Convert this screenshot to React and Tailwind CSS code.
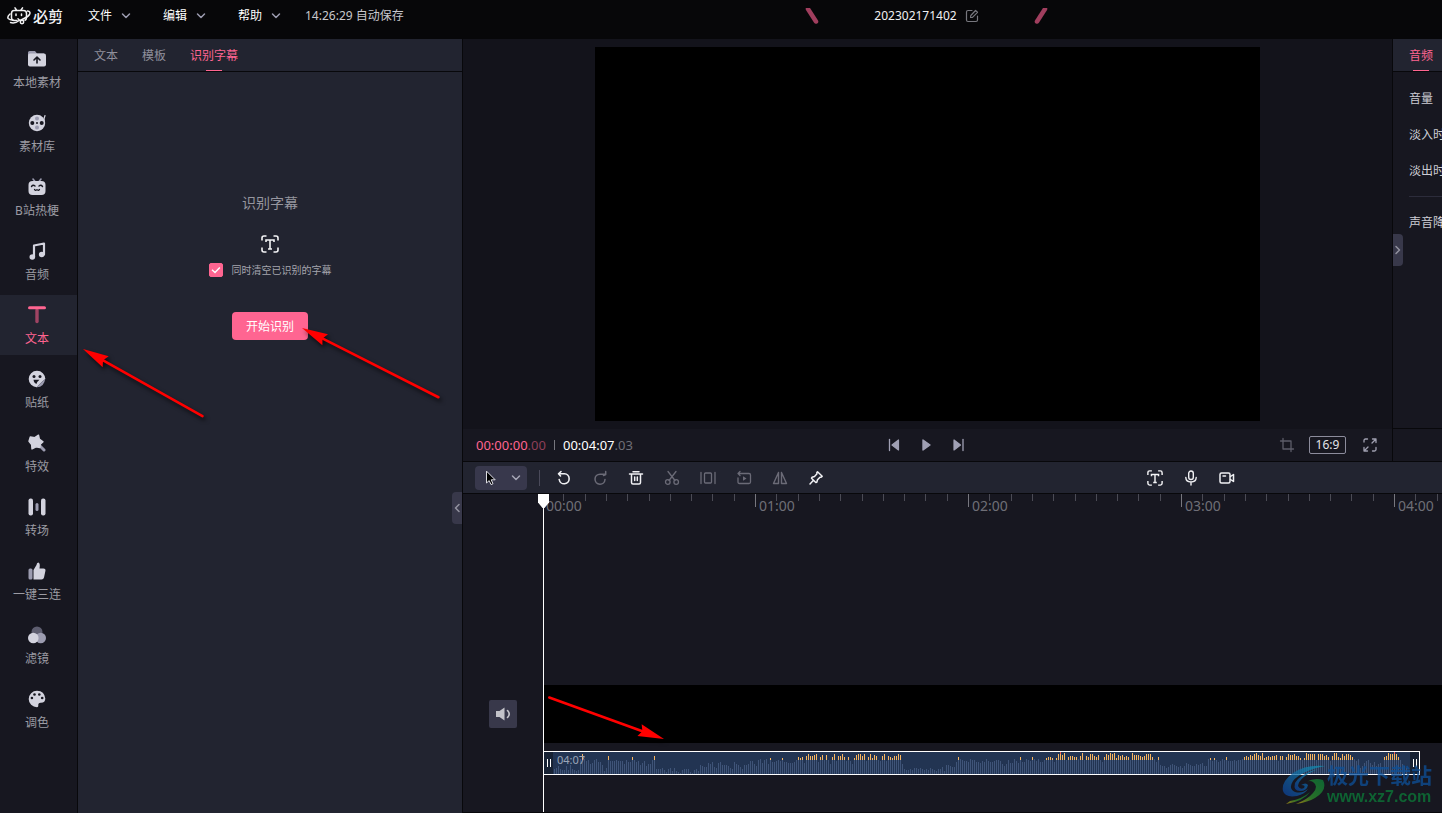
import React, { useState } from 'react';

// viewBox units are screen pixels for every icon below
const Icon = ({ size = 18, className = '', children }) => (
	<svg
		width={size}
		height={size}
		viewBox={`0 0 ${size} ${size}`}
		fill="none"
		stroke="none"
		strokeLinecap="round"
		strokeLinejoin="round"
		className={`shrink-0 ${className}`}
		aria-hidden="true"
	>
		{children}
	</svg>
);

const LIGHT = '#d3d3de';
const DIM = '#9c9cb0';
const DARK = '#171720';

const FolderIcon = () => (
	<Icon>
		<path d="M0 4V2.5Q0 1 1.500 1H7L9 3.500H16V6H0Z" fill={DIM} />
		<rect y="3.500" width="18" height="13" rx="2" fill={LIGHT} />
		<path d="M9 13V8M6 10L9 7.200L12 10" stroke={DARK} strokeWidth="1.600" />
	</Icon>
);

const ReelIcon = () => (
	<Icon>
		<path d="M13 15Q16.500 11 16 5L17 1.500" stroke={LIGHT} strokeWidth="1.200" />
		<circle cx="9" cy="9" r="8.200" fill={LIGHT} />
		<circle cx="9" cy="4.500" r="2" fill={DIM} />
		<circle cx="9" cy="13.500" r="2" fill={DIM} />
		<circle cx="4.300" cy="9" r="2" fill={DARK} />
		<circle cx="13.700" cy="9" r="2" fill={DARK} />
		<circle cx="9" cy="9" r="1" fill={DARK} />
	</Icon>
);

const TvIcon = () => (
	<Icon>
		<path d="M5 1L7 3.500M13 1L11 3.500" stroke={DIM} strokeWidth="1.600" />
		<rect x="0.500" y="3" width="17" height="14" rx="4" fill={LIGHT} />
		<path d="M3.500 8.500Q5 6.500 7 8M11 8Q13 6.500 14.500 8.500" stroke={DARK} strokeWidth="1.400" />
		<path d="M6.500 11.500Q7.800 13 9 11.700Q10.200 13 11.500 11.500" stroke={DARK} strokeWidth="1.200" />
	</Icon>
);

const MusicIcon = () => (
	<Icon>
		<path d="M6 15V3.500L16 1.500V12.500" stroke={LIGHT} strokeWidth="2.200" />
		<circle cx="4.300" cy="15" r="2.800" fill={LIGHT} />
		<circle cx="13.700" cy="12.500" r="2.800" fill={LIGHT} />
	</Icon>
);

const TextIcon = () => (
	<Icon>
		<path d="M9 4V15.500" stroke="#a04463" strokeWidth="3.400" />
		<path d="M1.500 1.800H16.500" stroke="#ff6591" strokeWidth="3" />
	</Icon>
);

const StickerIcon = () => (
	<Icon>
		<path d="M17.300 9A8.300 8.300 0 1 0 9 17.300Q10 13 17.300 9Z" fill={LIGHT} />
		<path d="M5.500 9.800H11.500Q9.500 12 9 14Q6 13.500 5.500 9.800Z" fill={DARK} />
		<path d="M17.300 8.500L8.500 17.300Q7.800 12 11 10.500Q13.500 9 17.300 8.500Z" fill={LIGHT} />
		<path d="M17.300 8.500L8.500 17.300Q16 17.500 17.300 8.500Z" fill={DIM} />
		<circle cx="6" cy="6.500" r="1.500" fill={DARK} />
		<circle cx="12" cy="6.500" r="1.500" fill={DARK} />
	</Icon>
);

const MagicIcon = () => (
	<Icon>
		<path d="M12 12L16 16" stroke={DIM} strokeWidth="3" />
		<path
			d="M10.500 1.200L11.300 5L15 7.800L12.300 10.300L11.800 13.500L8 12.800L4 15L3.600 10.500L1 7.200L2.300 3L6.800 3.600Z"
			fill={LIGHT}
			stroke={LIGHT}
			strokeWidth="1.400"
		/>
	</Icon>
);

const TransitionIcon = () => (
	<Icon>
		<rect x="0.500" y="0.500" width="4.500" height="17" rx="2" fill={LIGHT} />
		<rect x="7.500" y="5" width="3" height="8" rx="1.500" fill={DIM} />
		<rect x="13" y="0.500" width="4.500" height="17" rx="2" fill={LIGHT} />
	</Icon>
);

const ThumbIcon = () => (
	<Icon>
		<rect x="0.500" y="6.500" width="4" height="11" rx="1.500" fill={DIM} />
		<path
			d="M5.500 17.500V8L8.500 3Q8.800 0.500 10.200 0.500Q12.500 1 11.500 6.500H15.500Q17.800 6.500 17.500 8.500L16 15.500Q15.500 17.500 13.500 17.500Z"
			fill={LIGHT}
		/>
	</Icon>
);

const FilterIcon = () => (
	<Icon>
		<circle cx="9" cy="6" r="5.500" fill="#5e5e70" />
		<circle cx="12.700" cy="12" r="5.300" fill={DIM} />
		<circle cx="5.300" cy="12" r="5.300" fill={LIGHT} />
	</Icon>
);

const PaletteIcon = () => (
	<Icon>
		<path
			d="M9 0.700A8.300 8.300 0 0 0 9 17.300Q10.500 17.300 10.300 15.500Q10 12.500 13 12.700Q17.300 12.700 17.300 8.500Q16.500 1 9 0.700Z"
			fill={LIGHT}
		/>
		<circle cx="3.900" cy="8" r="1.300" fill={DARK} />
		<circle cx="6.500" cy="4.500" r="1.300" fill={DARK} />
		<circle cx="11.300" cy="4.500" r="1.300" fill={DARK} />
		<circle cx="14.200" cy="8" r="1.300" fill={DARK} />
	</Icon>
);

const ScanTextIcon = ({ size }) => (
	<svg width={size} height={size} viewBox="0 0 18 18" fill="none" stroke="#f4f4f6" strokeWidth="1.600" aria-hidden="true">
		<path d="M1 5.500V3Q1 1 3 1H5.500M12.500 1H15Q17 1 17 3V5.500M17 12.500V15Q17 17 15 17H12.500M5.500 17H3Q1 17 1 15V12.500" />
		<path d="M5 7V5H13V7M9 5V13.800M7 14H11" />
	</svg>
);

const Chevron = ({ className = '' }) => (
	<Icon size={10} className={className}>
		<path d="M1.500 3L5 6.500L8.500 3" stroke="currentColor" strokeWidth="1.500" />
	</Icon>
);

const CursorIcon = () => (
	<Icon size={16}>
		<path
			d="M4.500 1.500V13L7.200 10.600L9 14.600L11 13.700L9.200 9.800H12.800Z"
			fill="#000"
			stroke="#dcdce2"
			strokeWidth="1"
		/>
	</Icon>
);

const UndoIcon = () => (
	<Icon size={16}>
		<path d="M3 3.800H8.500A5 5 0 1 1 3.200 9.500M5 1.500L2.500 3.800L4.500 6" stroke="currentColor" strokeWidth="1.600" />
	</Icon>
);

const RedoIcon = () => (
	<Icon size={16}>
		<path d="M13 4.200H8A5 5 0 1 0 13 9.500M13.700 1.500V4.500L11.500 5.500" stroke="currentColor" strokeWidth="1.500" />
	</Icon>
);

const TrashIcon = () => (
	<Icon size={16}>
		<path
			d="M1.500 4H14.500M5 1.700H11M3.500 4.500V12.500Q3.500 14 5 14H11Q12.500 14 12.500 12.500V4.500M6.700 7V10.500M9.300 7V10.500"
			stroke="currentColor"
			strokeWidth="1.500"
		/>
	</Icon>
);

const CutIcon = () => (
	<Icon size={16}>
		<circle cx="3.800" cy="12" r="2.300" stroke="currentColor" strokeWidth="1.300" />
		<circle cx="12.200" cy="12" r="2.300" stroke="currentColor" strokeWidth="1.300" />
		<path d="M4 1.500L11 10.500M12 1.500L5 10.500" stroke="currentColor" strokeWidth="1.300" />
	</Icon>
);

const SplitIcon = () => (
	<Icon size={16}>
		<path d="M1 2.500V13.500M15 2.500V13.500" stroke="currentColor" strokeWidth="1.300" />
		<rect x="4.500" y="3" width="7" height="10" rx="1" stroke="currentColor" strokeWidth="1.300" />
	</Icon>
);

const ReverseIcon = () => (
	<Icon size={16}>
		<path
			d="M2 3.500H13Q14.500 3.500 14.500 5V12Q14.500 13.500 13 13.500H3.500Q2 13.500 2 12V8M4 1.500L2 3.500L4 5.500"
			stroke="currentColor"
			strokeWidth="1.300"
		/>
		<path d="M7 6.200V10.800L10.500 8.500Z" fill="currentColor" />
	</Icon>
);

const MirrorIcon = () => (
	<Icon size={16}>
		<path d="M6.500 2.500V13.500H1.500ZM9.500 2.500V13.500H14.500Z" stroke="currentColor" strokeWidth="1.400" />
	</Icon>
);

const PinIcon = () => (
	<Icon size={16}>
		<path
			d="M9.500 1.800L14.200 6.300L12.800 7.300L12 7.200L9.500 9.800L8.800 12.300L7.800 12.500L3.500 8.200L4 7.300L6.500 6.500L9 3.800L8.800 2.800ZM5.200 10.500L2 14"
			stroke="currentColor"
			strokeWidth="1.500"
		/>
	</Icon>
);

const MicIcon = () => (
	<Icon size={16}>
		<rect x="5.700" y="1" width="4.600" height="8.500" rx="2.300" stroke="currentColor" strokeWidth="1.400" />
		<path d="M2.800 7.500Q3 12 8 12Q13 12 13.200 7.500M8 12V15" stroke="currentColor" strokeWidth="1.400" />
	</Icon>
);

const CameraIcon = () => (
	<Icon size={16}>
		<rect x="1" y="3" width="10" height="10" rx="1.500" stroke="currentColor" strokeWidth="1.500" />
		<path d="M4 6H6.500M11.500 6.500L14.500 4.500V11.500L11.500 9.500" stroke="currentColor" strokeWidth="1.500" />
	</Icon>
);

const navItems = [
	{ label: '本地素材', icon: FolderIcon },
	{ label: '素材库', icon: ReelIcon },
	{ label: 'B站热梗', icon: TvIcon },
	{ label: '音频', icon: MusicIcon },
	{ label: '文本', icon: TextIcon },
	{ label: '贴纸', icon: StickerIcon },
	{ label: '特效', icon: MagicIcon },
	{ label: '转场', icon: TransitionIcon },
	{ label: '一键三连', icon: ThumbIcon },
	{ label: '滤镜', icon: FilterIcon },
	{ label: '调色', icon: PaletteIcon },
];

const tools = [
	{ label: '撤销', icon: UndoIcon, enabled: true },
	{ label: '重做', icon: RedoIcon, enabled: false },
	{ label: '删除', icon: TrashIcon, enabled: true },
	{ label: '分割', icon: CutIcon, enabled: false },
	{ label: '定格', icon: SplitIcon, enabled: false },
	{ label: '倒放', icon: ReverseIcon, enabled: false },
	{ label: '镜像', icon: MirrorIcon, enabled: false },
	{ label: '标记', icon: PinIcon, enabled: true },
];

// one value per bar, in pixels; above 15 the top of the bar is drawn as loud
const levels = [
	5, 6, 8, 5, 4, 4, 8, 4, 9, 5, 4, 3, 4, 15, 20, 15, 13, 14, 10, 11, 14, 15, 12, 12, 9, 3, 6, 18, 13, 13,
	13, 14, 13, 13, 13, 10, 14, 12, 12, 17, 14, 12, 13, 9, 11, 13, 8, 10, 10, 14, 18, 5, 5, 5, 6, 4, 2, 5,
	6, 3, 6, 3, 2, 1, 4, 5, 5, 5, 2, 1, 4, 5, 3, 9, 8, 7, 7, 11, 10, 12, 7, 6, 11, 12, 9, 9, 9, 8, 6, 5, 12,
	10, 9, 7, 5, 9, 9, 10, 13, 13, 10, 8, 14, 15, 11, 14, 15, 10, 16, 12, 12, 13, 14, 13, 16, 12, 12, 11,
	11, 11, 12, 14, 17, 16, 17, 11, 18, 20, 18, 18, 19, 20, 12, 17, 19, 14, 19, 14, 10, 17, 20, 13, 18, 18,
	20, 17, 13, 17, 13, 10, 16, 19, 20, 20, 18, 20, 13, 17, 20, 16, 19, 18, 14, 13, 18, 20, 13, 18, 17,
	16, 18, 18, 20, 19, 10, 5, 4, 4, 5, 4, 6, 6, 5, 6, 5, 4, 5, 4, 6, 5, 4, 3, 5, 5, 7, 3, 9, 9, 8, 7, 7,
	12, 17, 15, 14, 13, 13, 12, 15, 14, 14, 12, 12, 11, 13, 12, 15, 13, 12, 12, 13, 14, 14, 13, 10, 8, 10,
	14, 11, 11, 15, 13, 11, 17, 12, 12, 15, 14, 13, 17, 15, 13, 15, 12, 12, 14, 16, 17, 17, 16, 12, 16, 20,
	22, 19, 21, 14, 17, 18, 18, 17, 17, 15, 18, 21, 14, 18, 17, 20, 20, 18, 17, 19, 14, 12, 17, 20, 19, 21,
	20, 21, 16, 19, 18, 19, 17, 18, 17, 14, 21, 19, 19, 19, 18, 17, 18, 20, 20, 20, 17, 15, 12, 17, 9, 8, 8,
	6, 7, 9, 10, 9, 8, 7, 8, 6, 8, 11, 10, 9, 8, 8, 10, 9, 10, 11, 8, 8, 15, 16, 13, 16, 14, 12, 13, 15, 14,
	17, 13, 13, 13, 14, 13, 14, 14, 15, 17, 18, 17, 19, 18, 20, 21, 19, 18, 21, 16, 17, 18, 17, 18, 18, 19,
	13, 18, 18, 14, 17, 20, 19, 19, 20, 18, 18, 16, 14, 16, 21, 20, 20, 20, 20, 14, 20, 20, 20, 18, 19, 17,
	13, 18, 21, 21, 17, 16, 20, 18, 20, 20, 19, 17, 15, 13, 15, 6, 8, 11, 13, 14, 11, 9, 12, 8, 10, 11, 7,
	17, 18, 21, 20, 20, 22, 20, 17, 14, 10, 8, 6,
];

const Waveform = () => (
	<svg width="860" height="22" className="shrink-0" shapeRendering="crispEdges" aria-hidden="true">
		{levels.map((level, i) => {
			const loud = level > 15;
			const base = loud ? 14 : level;
			return (
				<g key={i}>
					<rect x={i * 2 + 1} y={22 - base} width="1" height={base} fill="#3f5478" />
					{loud && <rect x={i * 2 + 1} y={22 - level} width="1" height={level - 14} fill="#f7b55f" />}
					{level > 21 && <rect x={i * 2 + 1} y="0" width="1" height="2" fill="#f25a5a" />}
				</g>
			);
		})}
	</svg>
);

const Ruler = () => (
	<div className="flex h-7 overflow-hidden">
		{['00:00', '01:00', '02:00', '03:00', '04:00'].map((time) => (
			<div key={time} className="relative h-7 w-[213px] shrink-0">
				<svg width="213" height="14" className="absolute left-0 top-0" shapeRendering="crispEdges" aria-hidden="true">
					<rect x="0" y="0" width="1" height="13" fill="#77777f" />
					{[1, 2, 3, 4, 5, 6, 7, 8, 9].map((n) => (
						<rect key={n} x={Math.round(n * 21.3)} y="0" width="1" height="7" fill="#4b4b55" />
					))}
				</svg>
				<span className="block pl-1 pt-0.5 text-sm text-[#6f6f77]">{time}</span>
			</div>
		))}
	</div>
);

const Arrow = ({ length, angle, className }) => (
	<svg
		width="1"
		height="1"
		className={`pointer-events-none absolute overflow-visible drop-shadow-[2px_3px_2px_rgba(0,0,0,0.7)] ${className}`}
		aria-hidden="true"
	>
		<g transform={`rotate(${angle})`}>
			<path d={`M20 0H${length}`} stroke="#ff0000" strokeWidth="2.600" strokeLinecap="round" />
			<path d="M0 0L26 -6.200L23 0L26 6.200Z" fill="#ff0000" />
		</g>
	</svg>
);

const Header = () => (
	<header className="flex h-[39px] shrink-0 items-start bg-[#070709]">
		<div className="flex h-8 w-[463px] shrink-0 items-center pl-[7px]">
			<div className="flex w-[73px] items-center gap-0.5 text-[#f2f2f4]">
				<svg width="24" height="18" viewBox="0 0 24 18" fill="none" stroke="currentColor" strokeWidth="1.500" strokeLinecap="round" aria-hidden="true">
					<path d="M8 0.800L9.500 3M15.500 0.800L14 3M7 3.500H16.500Q19.500 3.500 19.500 6.500V10.500Q19.500 12.500 18 13.200M10 13.500H7Q4.500 13.500 4.500 10.500V6.500Q4.500 3.500 7 3.500" />
					<path d="M3 7Q0 9.500 1.200 11.500Q3 13.200 6 13M20.500 4Q24 4.500 22.500 7.500Q21 10 13 13.500" />
					<path d="M9 7V8.500M14.500 7V8.500M3.500 15.500Q8 17 12.500 13.200L11 11.800" />
					<circle cx="15" cy="15" r="1.700" />
				</svg>
				<span className="whitespace-nowrap text-[15px] font-medium leading-5">必剪</span>
			</div>
			<div className="flex">
				{['文件', '编辑', '帮助'].map((menu) => (
					<button key={menu} type="button" className="flex w-[75px] items-center gap-[9px] pl-2 text-xs text-white">
						{menu}
						<Chevron className="text-[#9c9cb0]" />
					</button>
				))}
			</div>
			<span className="whitespace-nowrap text-xs text-[#c8c8cd]">14:26:29 自动保存</span>
		</div>
		<div className="flex h-8 flex-1 items-center justify-center gap-[54px] pr-[52px]">
			<Icon size={16}>
				<path d="M4 1L12 13.500" stroke="#a03e5e" strokeWidth="4.500" />
			</Icon>
			<div className="flex items-center gap-2">
				<span className="text-xs text-[#f0f0f2]">202302171402</span>
				<button type="button" aria-label="重命名">
					<Icon size={14}>
						<path
							d="M7 1.500H3Q1.500 1.500 1.500 3V11Q1.500 12.500 3 12.500H11Q12.500 12.500 12.500 11V7M5.500 8.500L5.800 6.500L10.500 1.500L12.500 3.300L7.500 8.300Z"
							stroke="#77777e"
							strokeWidth="1.200"
						/>
					</Icon>
				</button>
			</div>
			<Icon size={16}>
				<path d="M12 1L4 13.500" stroke="#a03e5e" strokeWidth="4.500" />
			</Icon>
		</div>
	</header>
);

const Sidebar = ({ active, onSelect }) => (
	<nav className="flex w-[78px] shrink-0 flex-col gap-1 border-r border-[#08080b] bg-[#171720]">
		{navItems.map(({ label, icon: ItemIcon }) => (
			<button
				key={label}
				type="button"
				onClick={() => onSelect(label)}
				className={`flex h-[60px] flex-col items-center gap-[5px] pr-[3px] pt-[11px] text-xs ${
					active === label ? 'bg-[#222430] text-[#ff6591]' : 'text-[#9b9ba3]'
				}`}
			>
				<ItemIcon />
				<span className="leading-5">{label}</span>
			</button>
		))}
	</nav>
);

const SubtitlePanel = () => {
	const [clear, setClear] = useState(true);
	return (
		<aside className="relative w-[385px] shrink-0 border-r border-[#08080b] bg-[#222430]">
			<div className="flex h-[33px] gap-6 border-b border-[#08080b] pl-4 text-xs text-[#8f8f9b]">
				<button type="button" className="pt-0.5">文本</button>
				<button type="button" className="pt-0.5">模板</button>
				<button type="button" className="relative pt-0.5 text-[#ff6591]">
					识别字幕
					<span className="absolute bottom-0 left-4 h-px w-4 bg-[#ff6591]" />
				</button>
			</div>
			<div className="flex flex-col items-center pt-[121px]">
				<h2 className="text-sm leading-5 text-[#96969f]">识别字幕</h2>
				<div className="mt-[22px]">
					<ScanTextIcon size={18} />
				</div>
				<label className="mt-[9px] flex items-center gap-[9px] text-[10px] leading-4 text-[#a5a5ad]">
					<span className="relative flex">
						<input
							type="checkbox"
							checked={clear}
							onChange={(e) => setClear(e.target.checked)}
							className="peer size-3.5 appearance-none rounded-xs border border-[#ff6591] checked:bg-[#ff6591]"
						/>
						<svg width="14" height="14" viewBox="0 0 14 14" fill="none" className="pointer-events-none invisible absolute inset-0 peer-checked:visible" aria-hidden="true">
							<path d="M3 6.800L6 9.500L10.800 4.500" stroke="#fff" strokeWidth="1.400" />
						</svg>
					</span>
					同时清空已识别的字幕
				</label>
				<button type="button" className="mt-[34px] h-7 w-[76px] rounded bg-[#ff6591] pt-0.5 text-xs text-white">
					开始识别
				</button>
			</div>
			<button
				type="button"
				aria-label="收起面板"
				className="absolute bottom-[289px] right-0 flex h-8 w-2.5 items-center justify-center rounded-l bg-[#38384a] text-[#92929f]"
			>
				<Chevron className="rotate-90" />
			</button>
		</aside>
	);
};

const Player = () => (
	<section className="flex min-w-0 flex-1 flex-col bg-[#13131b]">
		<div className="flex min-h-0 flex-1 justify-center py-2">
			<div className="aspect-video h-full bg-black" />
		</div>
		<div className="grid h-8 shrink-0 grid-cols-[1fr_auto_1fr] items-center bg-[#171720] pl-[13px] pr-3.5">
			<div className="flex items-center text-[13px] leading-5">
				<span className="text-[#ff6591]">00:00:00</span>
				<span className="text-[#8e3f58]">.00</span>
				<span className="mx-2 h-2.5 w-px bg-[#77777e]" />
				<span className="text-white">00:04:07</span>
				<span className="text-[#6f6f77]">.03</span>
			</div>
			<div className="flex gap-4">
				<button type="button" aria-label="上一帧">
					<Icon size={16}>
						<path d="M2.500 2.500V13.500" stroke="#a0a0b4" strokeWidth="1.300" />
						<path d="M11.500 3V13L5 8Z" fill="#a0a0b4" stroke="#a0a0b4" strokeWidth="1.200" />
					</Icon>
				</button>
				<button type="button" aria-label="播放">
					<Icon size={16}>
						<path d="M4 3V13L11 8Z" fill="#a0a0b4" stroke="#a0a0b4" strokeWidth="1.400" />
					</Icon>
				</button>
				<button type="button" aria-label="下一帧">
					<Icon size={16}>
						<path d="M12 2.500V13.500" stroke="#a0a0b4" strokeWidth="1.300" />
						<path d="M3 3V13L9.500 8Z" fill="#a0a0b4" stroke="#a0a0b4" strokeWidth="1.200" />
					</Icon>
				</button>
			</div>
			<div className="flex items-center justify-end gap-3.5">
				<button type="button" aria-label="裁剪">
					<Icon size={16}>
						<path d="M4 1.500V12H14.500M1.500 4H12V14.500" stroke="#5c5c68" strokeWidth="1.300" />
					</Icon>
				</button>
				<button type="button" className="h-[18px] w-[37px] rounded-xs border border-[#8c8c9c] text-xs leading-4 text-[#e4e4e8]">
					16:9
				</button>
				<button type="button" aria-label="全屏" className="ml-0.5">
					<Icon size={16}>
						<path
							d="M2 5V3.500Q2 2 3.500 2H5.500M10.500 2H14V5.500M10 6L14 2M14 10.500V12.500Q14 14 12.500 14H10.500M5.500 14H2V10.500M2 14L6 10"
							stroke="#a0a0b0"
							strokeWidth="1.300"
						/>
					</Icon>
				</button>
			</div>
		</div>
	</section>
);

const AudioSettings = () => (
	<aside className="relative flex w-[50px] shrink-0 flex-col overflow-hidden border-l border-[#08080b] bg-[#171720] text-xs">
		<div className="flex h-[33px] shrink-0 border-b border-[#08080b] bg-[#222430] pl-4">
			<button type="button" className="relative shrink-0 pt-0.5 text-[#ff6591]">
				音频
				<span className="absolute bottom-0 left-1 h-px w-4 bg-[#ff6591]" />
			</button>
		</div>
		<div className="flex-1 whitespace-nowrap pl-4 pt-[9px] text-[#cdcdd4]">
			<p className="leading-9">音量</p>
			<p className="leading-9">淡入时长</p>
			<p className="leading-9">淡出时长</p>
			<hr className="mb-2 mt-[7px] border-[#2c2c3b]" />
			<p className="leading-9">声音降噪</p>
		</div>
		<div className="h-[33px] shrink-0 border-t border-[#08080b]" />
		<button
			type="button"
			aria-label="收起设置"
			className="absolute left-0 top-[195px] flex h-8 w-2.5 items-center justify-center rounded-r bg-[#38384a] text-[#92929f]"
		>
			<Chevron className="-rotate-90" />
		</button>
	</aside>
);

const Toolbar = () => (
	<div className="flex h-8 shrink-0 items-center border-b border-[#08080b] bg-[#222430] pl-3 text-[#f0f0f3]">
		<button type="button" aria-label="选择工具" className="flex h-6 w-[52px] items-center justify-between rounded bg-[#38384c] pl-[7px] pr-1.5">
			<CursorIcon />
			<Chevron className="text-[#a5a5b5]" />
		</button>
		<span className="ml-3 mr-4 h-4 w-px bg-[#4a4a5a]" />
		<div className="flex gap-5">
			{tools.map(({ label, icon: ToolIcon, enabled }) => (
				<button key={label} type="button" aria-label={label} disabled={!enabled} className={enabled ? '' : 'text-[#6b6b77]'}>
					<ToolIcon />
				</button>
			))}
		</div>
		<div className="ml-auto mr-[207px] flex gap-5">
			<button type="button" aria-label="识别字幕">
				<ScanTextIcon size={16} />
			</button>
			<button type="button" aria-label="录音">
				<MicIcon />
			</button>
			<button type="button" aria-label="录屏">
				<CameraIcon />
			</button>
		</div>
	</div>
);

const Timeline = () => (
	<section className="flex h-[319px] shrink-0 border-b border-[#08080b] bg-[#171720]">
		<div className="flex w-[79px] shrink-0 flex-col items-end pr-[25px] pt-[206px]">
			<button type="button" aria-label="静音" className="flex size-7 items-center justify-center rounded-xs bg-[#38384a]">
				<Icon size={18}>
					<path d="M2 6H5.500L10.500 2.500V15.500L5.500 12H2Z" fill="#c3c3c9" />
					<path d="M13.500 5.500Q17 9 13.500 12.500" stroke="#c3c3c9" strokeWidth="1.600" />
				</Icon>
			</button>
		</div>
		<div className="relative min-w-0 flex-1">
			<Ruler />
			<div className="ml-0.5 mt-[163px] h-[58px] bg-black" />
			<div className="ml-px mt-2 flex h-6 w-[877px] border border-white bg-[#223452]">
				<div className="flex w-[9px] shrink-0 items-center justify-center gap-0.5 bg-[#172234]">
					<span className="h-2 w-px bg-white" />
					<span className="h-2 w-px bg-white" />
				</div>
				<div className="relative min-w-0 flex-1 overflow-hidden">
					<Waveform />
					<span className="absolute left-1 top-0 text-[11px] leading-4 text-[#9aa5b8]">04:07</span>
				</div>
				<div className="flex w-[9px] shrink-0 items-center justify-center gap-0.5 bg-[#172234]">
					<span className="h-2 w-px bg-white" />
					<span className="h-2 w-px bg-white" />
				</div>
			</div>
			{/* playhead */}
			<div className="absolute bottom-0 left-px top-0 w-px bg-white">
				<svg width="11" height="14" viewBox="0 0 11 14" className="absolute -left-[5px] top-0" aria-hidden="true">
					<path d="M0 0H11V8.500L6.500 14H4.500L0 8.500Z" fill="#fff" />
				</svg>
			</div>
		</div>
	</section>
);

const Watermark = () => (
	<div className="pointer-events-none absolute bottom-1.5 right-2.5 flex items-center gap-px opacity-75">
		<svg width="44" height="40" viewBox="0 0 44 40" fill="none" aria-hidden="true">
			<defs>
				<linearGradient id="swirlBlue" x1="1" y1="0" x2="0" y2="1">
					<stop offset="0" stopColor="#1497b4" />
					<stop offset="1" stopColor="#0d3f96" />
				</linearGradient>
				<linearGradient id="swirlGreen" x1="1" y1="0" x2="0" y2="1">
					<stop offset="0" stopColor="#0a7f3a" />
					<stop offset="0.600" stopColor="#2e8e2c" />
					<stop offset="1" stopColor="#c29b12" />
				</linearGradient>
			</defs>
			<path d="M43 1Q24 -1 11 8Q-1 17 1 26Q3 33 15 31Q23 29 26 24Q20 29 13 27Q6 24 11 16Q19 6 43 1Z" fill="url(#swirlBlue)" />
			<path d="M36 4Q18 9 13 18Q11 26 18 26Q25 26 26 20Q24 17 19 20Q24 20 22 23Q18 25 16 21Q17 12 36 4Z" fill="url(#swirlBlue)" />
			<path d="M24 17Q33 12 41 15Q46 25 33 33Q26 37 14 39Q26 34 31 28Q37 21 31 17Q28 15 24 17Z" fill="url(#swirlGreen)" />
			<path d="M28 27Q22 36 4 39L8 36Q20 34 28 27Z" fill="url(#swirlGreen)" />
		</svg>
		<div className="whitespace-nowrap">
			<p className="text-[21px] font-bold leading-6 text-[#0d5098]">极光下载站</p>
			<p className="font-['Liberation_Sans'] text-base font-bold leading-5 text-[#0b7c38]">www.xz7.com</p>
		</div>
	</div>
);

const App = () => {
	const [active, setActive] = useState('文本');
	return (
		<div className="relative flex h-screen flex-col overflow-hidden bg-[#171720] font-['Noto_Sans','Noto_Sans_CJK_SC',sans-serif]">
			<Header />
			<div className="flex min-h-0 flex-1">
				<Sidebar active={active} onSelect={setActive} />
				<SubtitlePanel />
				<main className="flex min-w-0 flex-1 flex-col">
					<div className="flex min-h-0 flex-1 border-b border-[#08080b]">
						<Player />
						<AudioSettings />
					</div>
					<Toolbar />
					<Timeline />
				</main>
			</div>
			<Arrow length={137} angle={29.3} className="left-[83px] top-[349px]" />
			<Arrow length={153} angle={26.9} className="left-[302px] top-[328px]" />
			<Arrow length={122} angle={199.9} className="left-[664px] top-[739px]" />
			<Watermark />
		</div>
	);
};

export default App;
